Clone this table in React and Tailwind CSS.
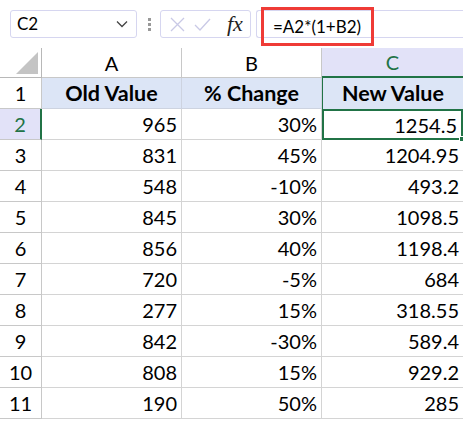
import React from 'react';

const rows = [
  [965, '30%', '1254.5'],
  [831, '45%', '1204.95'],
  [548, '-10%', '493.2'],
  [845, '30%', '1098.5'],
  [856, '40%', '1198.4'],
  [720, '-5%', '684'],
  [277, '15%', '318.55'],
  [842, '-30%', '589.4'],
  [808, '15%', '929.2'],
  [190, '50%', '285'],
];

const font = { fontFamily: 'Lato, "Liberation Sans", sans-serif' };

const App = () => {
  return (
    <div className="w-[463px] h-[422px] overflow-hidden bg-white text-black" style={font}>
      {/* Formula bar */}
      <div className="h-[48px] flex items-center relative">
        <div className="ml-[10px] w-[127px] h-[28px] border border-[#d6d6f0] rounded-[3px] flex items-center justify-between pl-[6px] pr-[8px] text-[17px]">
          <span>C2</span>
          <svg width="12" height="8" viewBox="0 0 12 8" fill="none" stroke="#444" strokeWidth="1.3">
            <path d="M1 1.5 L6 6.5 L11 1.5" />
          </svg>
        </div>
        <div className="ml-[11px] flex flex-col gap-[2px]">
          <div className="w-[3px] h-[3px] bg-[#999]" />
          <div className="w-[3px] h-[3px] bg-[#999]" />
          <div className="w-[3px] h-[3px] bg-[#999]" />
        </div>
        <div className="ml-[9px] w-[91px] h-[28px] border border-[#d6d6f0] rounded-[3px] flex items-center pl-[9px] gap-[9px]">
          <svg width="15" height="15" viewBox="0 0 15 15" stroke="#c9c9e6" strokeWidth="1.3">
            <path d="M1 1 L14 14 M14 1 L1 14" />
          </svg>
          <svg width="17" height="13" viewBox="0 0 17 13" fill="none" stroke="#c9c9e6" strokeWidth="1.3">
            <path d="M1 7 L6 12 L16 1" />
          </svg>
          <span className="ml-[7px] text-[22px] italic leading-none text-[#222]" style={{ fontFamily: '"Liberation Serif", serif' }}>fx</span>
        </div>
        <div className="ml-[5px] flex-1 h-[28px] border-y border-l border-[#d6d6f0] rounded-l-[3px]" />
        <div className="absolute left-[261px] top-[7px] w-[113px] h-[39px] border-[3px] border-[#ef3b36] flex items-center pl-[9px] text-[17px]">
          =A2*(1+B2)
        </div>
      </div>

      {/* Grid */}
      <div className="grid grid-cols-[42px_140px_140px_141px] grid-rows-[30px_repeat(11,31px)] text-[20px]">
        {/* column headers */}
        <div className="relative border-r border-b border-[#b8b8b8]">
          <div className="absolute right-[3px] bottom-[3px] w-0 h-0 border-l-[22px] border-l-transparent border-b-[22px] border-b-[#c4c4c4]" />
        </div>
        <div className="border-r border-b border-[#c8c8c8] flex items-center justify-center">A</div>
        <div className="border-r border-b border-[#c8c8c8] flex items-center justify-center">B</div>
        <div className="bg-[#e2e2f8] border-b-2 border-[#217346] flex items-center justify-center text-[#217346]">C</div>

        {/* row 1 */}
        <div className="border-r border-b border-[#c8c8c8] flex items-center justify-center">1</div>
        <div className="bg-[#dce5f6] border-r border-b border-[#cdd3e0] flex items-center justify-center font-bold text-[21.5px]">Old Value</div>
        <div className="bg-[#dce5f6] border-r border-b border-[#cdd3e0] flex items-center justify-center font-bold text-[21.5px]">% Change</div>
        <div className="bg-[#dce5f6] border-l border-[#217346] flex items-center justify-center font-bold text-[21.5px]">New Value</div>

        {rows.map((r, i) => {
          const sel = i === 0;
          return (
            <React.Fragment key={i}>
              <div
                className={
                  sel
                    ? 'bg-[#e2e2f8] border-r-2 border-r-[#217346] border-b border-b-[#c8c8c8] flex items-center justify-center text-[#217346]'
                    : 'border-r border-b border-[#c8c8c8] flex items-center justify-center'
                }
              >
                {i + 2}
              </div>
              <div className="border-r border-b border-[#d4d4d4] flex items-center justify-end pr-[4px]">{r[0]}</div>
              <div className="border-r border-b border-[#d4d4d4] flex items-center justify-end pr-[4px]">{r[1]}</div>
              {sel ? (
                <div className="relative border-2 border-[#217346] flex items-center justify-end pr-[4px]">
                  {r[2]}
                  <div className="absolute right-[-4px] bottom-[-4px] w-[6px] h-[6px] bg-[#217346] border border-white" />
                </div>
              ) : (
                <div className="border-b border-[#d4d4d4] flex items-center justify-end pr-[4px]">{r[2]}</div>
              )}
            </React.Fragment>
          );
        })}
      </div>
    </div>
  );
};

export default App;
